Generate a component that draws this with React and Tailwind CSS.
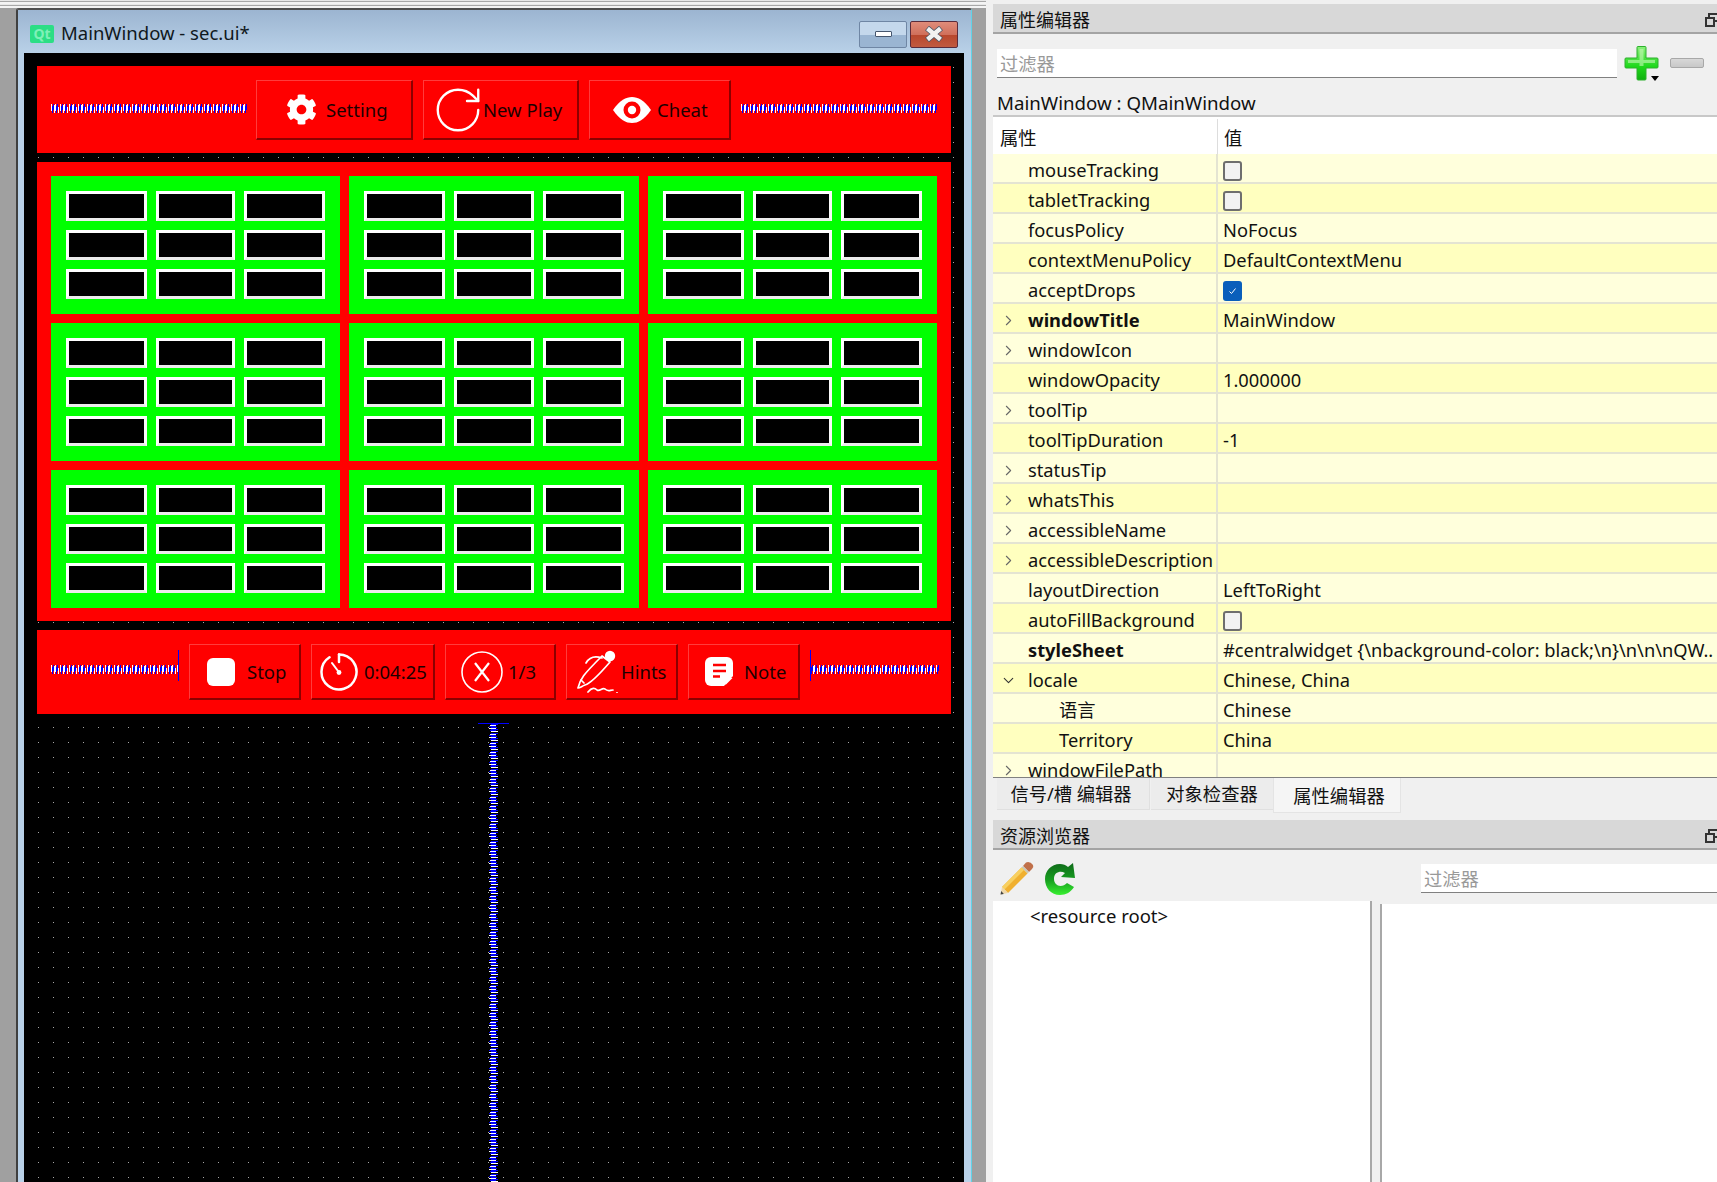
import React from "react";
import { RotateCw, ChevronRight, ChevronDown } from "lucide-react";
import { FaCog } from "react-icons/fa";

function HSpring({ w, cap }) {
  return (
    <div className={`relative h-[9px] shrink-0 ${w}`}>
      <svg width="100%" height="9" className="block" shapeRendering="crispEdges">
        <defs>
          <pattern id={"hs" + cap + w} width="9" height="9" patternUnits="userSpaceOnUse">
            <rect x="0" y="0" width="1" height="7" fill="#fff" />
            <rect x="1" y="2" width="1" height="7" fill="#00f" />
            <rect x="2" y="0" width="1" height="6" fill="#00f" />
            <rect x="3" y="1" width="1" height="8" fill="#fff" />
            <rect x="4" y="0" width="1" height="7" fill="#fff" />
            <rect x="5" y="2" width="1" height="7" fill="#00f" />
            <rect x="6" y="0" width="1" height="6" fill="#00f" />
            <rect x="7" y="3" width="1" height="6" fill="#fff" />
          </pattern>
        </defs>
        <rect width="100%" height="9" fill={`url(#hs${cap}${w})`} />
      </svg>
      {cap === "right" && <div className="absolute right-0 top-[-15px] h-[31px] w-px bg-[#0000ff]" />}
      {cap === "left" && <div className="absolute left-0 top-[-15px] h-[31px] w-px bg-[#0000ff]" />}
    </div>
  );
}

function VSpring() {
  return (
    <div className="relative ml-[441px] mt-[9px] h-[459px] w-[31px]">
      <div className="h-px w-[31px] bg-[#0000ff]" />
      <svg width="9" height="458" className="ml-[11px] block" shapeRendering="crispEdges">
        <defs>
          <pattern id="vs" width="9" height="9" patternUnits="userSpaceOnUse">
            <rect y="0" x="2" height="1" width="7" fill="#00f" />
            <rect y="1" x="1" height="1" width="6" fill="#fff" />
            <rect y="2" x="0" height="1" width="7" fill="#00f" />
            <rect y="3" x="2" height="1" width="6" fill="#00f" />
            <rect y="4" x="0" height="1" width="7" fill="#fff" />
            <rect y="5" x="2" height="1" width="7" fill="#00f" />
            <rect y="6" x="1" height="1" width="6" fill="#00f" />
            <rect y="7" x="2" height="1" width="7" fill="#fff" />
          </pattern>
        </defs>
        <rect width="9" height="458" fill="url(#vs)" />
      </svg>
    </div>
  );
}

function Btn({ className, children }) {
  return (
    <div className={`flex shrink-0 items-center border-t border-l border-r-2 border-b-2 border-t-[#ff3c3c] border-l-[#ff3c3c] border-r-[#8c0000] border-b-[#8c0000] text-[18.5px] leading-none text-[#1c0000] ${className}`}>
      {children}
    </div>
  );
}

function T({ children }) {
  return <span className="pt-[2px]">{children}</span>;
}

function TopT({ children }) {
  return <span className="pt-[1px]">{children}</span>;
}

function Eye() {
  return (
    <svg width="38" height="26" viewBox="0 0 38 26">
      <path d="M0 13 C7 3 13 0 19 0 C25 0 31 3 38 13 C31 23 25 26 19 26 C13 26 7 23 0 13 Z" fill="#fff" />
      <circle cx="19" cy="13" r="8.5" fill="#f00" />
      <circle cx="19" cy="13" r="4.2" fill="#fff" />
    </svg>
  );
}

function Timer() {
  return (
    <svg width="38" height="38" viewBox="0 0 38 38" fill="none" stroke="#fff" strokeWidth="2.5" strokeLinecap="round">
      <path d="M19 1.5 A17.5 17.5 0 1 1 9.5 4.3" />
      <path d="M19 1.5 V9" />
      <path d="M18 18 L12 10" strokeWidth="2" />
      <circle cx="19" cy="19.5" r="2.4" fill="#fff" stroke="none" />
    </svg>
  );
}

function CircleX() {
  return (
    <svg width="42" height="42" viewBox="0 0 42 42" fill="none" stroke="#fff">
      <circle cx="21" cy="21" r="20" strokeWidth="1.6" />
      <path d="M14 12 L28 30 M28 12 L14 30" strokeWidth="2.2" />
    </svg>
  );
}

function Pen() {
  return (
    <svg width="42" height="43" viewBox="0 0 42 43" fill="none" stroke="#fff" strokeWidth="1.7" strokeLinecap="round" strokeLinejoin="round">
      <path d="M1 38 C3 29 6 25 25 6 L33 12 C27 19 15 33 8 35 C5 36 3 38 1 38 Z" />
      <path d="M9 13 C13 6 19 6 25 8" />
      <path d="M7 33 L4 30" />
      <circle cx="33" cy="6" r="5.2" fill="#fff" stroke="none" />
      <path d="M11 42 C15 37 18 38 20 40 C23 42 25 37 28 39 C31 42 33 40 36 40" />
      <circle cx="40" cy="43" r="1" fill="#fff" stroke="none" />
    </svg>
  );
}

function NoteIcon() {
  return (
    <svg width="28" height="29" viewBox="0 0 28 29">
      <path d="M6 0 H22 A6 6 0 0 1 28 6 V19 L19 29 H6 A6 6 0 0 1 0 23 V6 A6 6 0 0 1 6 0 Z" fill="#fff" />
      <path d="M8 8 H21 M8 14 H21 M8 19.5 H15" stroke="#f00" strokeWidth="2.4" fill="none" />
      <path d="M20.5 28 V23 Q20.5 21 22.5 21 H27.5 Z" fill="#fff" />
    </svg>
  );
}

function QtLogo() {
  return (
    <div className="flex h-[18px] w-[24px] items-center justify-center rounded-[2px] bg-[#2cde85] text-[14px] font-bold leading-none text-[#7ff0b8]">
      Qt
    </div>
  );
}

function Cell({ w }) {
  return <div className={`h-[30px] border-[3px] border-t-white border-l-white border-r-[#fafafa] border-b-[#ececec] bg-black ${w}`} />;
}

function Block({ mid }) {
  const rows = [0, 1, 2];
  return (
    <div className="flex flex-col gap-[9px] bg-[#00ff00] pl-[15px] pt-[15px]">
      {rows.map((r) => (
        <div key={r} className="flex gap-[9px]">
          <Cell w="w-[81px]" />
          <Cell w={mid ? "w-[80px]" : "w-[79px]"} />
          <Cell w="w-[81px]" />
        </div>
      ))}
    </div>
  );
}

function MainWindow() {
  return (
    <div className="flex h-[1174px] w-[956px] flex-col rounded-t-[3px] border-t-2 border-l-2 border-r border-t-[#505050] border-l-[#404040] border-r-[#5fd4e8] bg-[#b9d1e8]">
      <div className="flex h-[43px] shrink-0 items-center bg-gradient-to-b from-[#9cb5d1] to-[#b9d1e8] pl-[12px] pt-[5px]">
        <QtLogo />
        <span className="ml-[7px] -mt-[2px] text-[18.5px] leading-none text-[#101820]">MainWindow - sec.ui*</span>
        <div className="ml-auto mr-[13px] flex gap-[3px]">
          <div className="flex h-[27px] w-[48px] items-center justify-center rounded-[2px] border border-[#6f86a4] bg-[linear-gradient(#c4d8ec_50%,#9ab5d2_50%)]">
            <div className="h-[6px] w-[17px] rounded-[1px] border border-[#45566e] bg-white" />
          </div>
          <div className="flex h-[27px] w-[48px] items-center justify-center rounded-[2px] border border-[#5a2c3c] bg-[linear-gradient(#e08c7a,#d0705c_50%,#b8462c_50%,#c05a40)]">
            <svg width="20" height="16" viewBox="0 0 20 16">
              <path d="M3 2 L17 14 M17 2 L3 14" stroke="#4c5868" strokeWidth="6" />
              <path d="M3.5 2.5 L16.5 13.5 M16.5 2.5 L3.5 13.5" stroke="#f2f2f2" strokeWidth="4.4" />
            </svg>
          </div>
        </div>
      </div>
      <div className="flex min-h-0 flex-1 pl-[6px] pr-[7px]">
        <div className="w-[940px] bg-black bg-[radial-gradient(circle_at_0.5px_0.5px,#a8a8a8_0.6px,transparent_0.7px)] bg-[length:15px_15px] bg-[position:14px_14px] pl-[13px] pt-[13px]">
          <div className="flex h-[87px] w-[914px] items-start gap-[10px] bg-[#ff0000] pl-[14px] pt-[14px]">
            <div className="mr-[-1px] pt-[24px]"><HSpring w="w-[196px]" cap="none1" /></div>
            <Btn className="h-[60px] w-[157px] pl-[29px] gap-[9px]">
              <FaCog size={31} color="#fff" />
              <TopT>Setting</TopT>
            </Btn>
            <Btn className="h-[60px] w-[156px] pl-[12px] gap-[3px]">
              <RotateCw size={54} color="#fff" strokeWidth={1.05} className="-m-[5px] shrink-0" />
              <TopT>New Play</TopT>
            </Btn>
            <Btn className="h-[60px] w-[142px] pl-[23px] gap-[6px]">
              <Eye />
              <TopT>Cheat</TopT>
            </Btn>
            <div className="pt-[24px]"><HSpring w="w-[196px]" cap="none2" /></div>
          </div>
          <div className="mt-[9px] grid h-[459px] w-[914px] grid-cols-[289px_290px_289px] grid-rows-[138px_138px_138px] gap-[9px] bg-[#ff0000] pl-[14px] pt-[14px]">
            {[0, 1, 2, 3, 4, 5, 6, 7, 8].map((i) => (
              <Block key={i} mid={i % 3 === 1} />
            ))}
          </div>
          <div className="mt-[9px] flex h-[84px] w-[914px] items-start gap-[10px] bg-[#ff0000] pl-[14px] pt-[14px]">
            <div className="pt-[21px]"><HSpring w="w-[128px]" cap="right" /></div>
            <Btn className="h-[56px] w-[112px] pl-[17px] gap-[12px]">
              <div className="h-[28px] w-[28px] rounded-[6px] bg-white" />
              <T>Stop</T>
            </Btn>
            <Btn className="h-[56px] w-[124px] pl-[8px] gap-[6px]">
              <Timer />
              <T>0:04:25</T>
            </Btn>
            <Btn className="h-[56px] w-[111px] pl-[15px] gap-[5px]">
              <CircleX />
              <T>1/3</T>
            </Btn>
            <Btn className="h-[56px] w-[112px] pl-[10px] gap-[2px]">
              <Pen />
              <T>Hints</T>
            </Btn>
            <Btn className="h-[56px] w-[112px] pl-[16px] gap-[11px]">
              <NoteIcon />
              <T>Note</T>
            </Btn>
            <div className="pt-[21px]"><HSpring w="w-[129px]" cap="left" /></div>
          </div>
          <VSpring />
        </div>
      </div>
    </div>
  );
}

function DockHeader({ title }) {
  return (
    <div className="flex h-[30px] shrink-0 items-center justify-between overflow-hidden border-b-2 border-[#a4a4a4] bg-[#d8d8d8] pl-[7px] pt-[4px] text-[18px] leading-none text-[#111]">
      <span>{title}</span>
      <svg width="12" height="14" viewBox="0 0 12 14" fill="none" stroke="#333" strokeWidth="2" className="-mt-[1px]">
        <rect x="4" y="1" width="10" height="7" />
        <rect x="1" y="5" width="8" height="8" fill="#d8d8d8" />
      </svg>
    </div>
  );
}

function Filter({ className }) {
  return (
    <div className={`flex h-[29px] items-center border-b border-[#808080] bg-white pl-[3px] pt-[2px] text-[18.3px] leading-none text-[#999] ${className}`}>
      过滤器
    </div>
  );
}

const props = [
  { n: "mouseTracking", c: "off" },
  { n: "tabletTracking", c: "off" },
  { n: "focusPolicy", v: "NoFocus" },
  { n: "contextMenuPolicy", v: "DefaultContextMenu" },
  { n: "acceptDrops", c: "on" },
  { n: "windowTitle", v: "MainWindow", b: true, e: "r" },
  { n: "windowIcon", e: "r" },
  { n: "windowOpacity", v: "1.000000" },
  { n: "toolTip", e: "r" },
  { n: "toolTipDuration", v: "-1" },
  { n: "statusTip", e: "r" },
  { n: "whatsThis", e: "r" },
  { n: "accessibleName", e: "r" },
  { n: "accessibleDescription", e: "r" },
  { n: "layoutDirection", v: "LeftToRight" },
  { n: "autoFillBackground", c: "off" },
  { n: "styleSheet", v: "#centralwidget {\\nbackground-color: black;\\n}\\n\\n\\nQW..", b: true },
  { n: "locale", v: "Chinese, China", e: "d" },
  { n: "语言", v: "Chinese", sub: true },
  { n: "Territory", v: "China", sub: true },
  { n: "windowFilePath", e: "r" },
];

function PropRow({ p, i }) {
  return (
    <div className={`flex h-[30px] shrink-0 border-b-2 border-[#e4e4d2] text-[18.3px] leading-none text-[#111] ${i % 2 ? "bg-[#ffffbf]" : "bg-[#ffffdc]"}`}>
      <div className={`relative flex w-[225px] shrink-0 items-center whitespace-nowrap border-r-2 border-[#e4e4d2] pt-[4px] ${p.sub ? "pl-[66px]" : "pl-[35px]"} ${p.b ? "font-bold" : ""}`}>
        {p.e === "r" && <ChevronRight size={17} color="#666666" strokeWidth={1.5} className="absolute left-[7px] top-[8px]" />}
        {p.e === "d" && <ChevronDown size={17} color="#333333" strokeWidth={1.5} className="absolute left-[7px] top-[8px]" />}
        {p.n}
      </div>
      <div className="flex min-w-0 flex-1 items-center whitespace-nowrap pl-[5px] pt-[4px]">
        {p.v}
        {p.c === "off" && <div className="mt-[1px] h-[20px] w-[19px] rounded-[3px] border-2 border-[#6e6e6e] bg-[#f2f2f2]" />}
        {p.c === "on" && (
          <div className="mt-[1px] flex h-[20px] w-[19px] items-center justify-center rounded-[3px] bg-[#0a5fbb]">
            <svg width="9" height="8" viewBox="0 0 9 8" fill="none" stroke="#fff" strokeWidth="1"><path d="M1.5 4.5 L3.5 6.5 L7.5 1.5" /></svg>
          </div>
        )}
      </div>
    </div>
  );
}

function PlusIcon() {
  return (
    <div className="relative h-[35px] w-[36px]">
      <svg width="36" height="35" viewBox="0 0 36 35">
        <defs>
          <linearGradient id="plusg" x1="0" y1="0" x2="0" y2="1">
            <stop offset="0" stopColor="#8cf07c" />
            <stop offset="0.6" stopColor="#1ed81a" />
            <stop offset="1" stopColor="#10b010" />
          </linearGradient>
        </defs>
        <path d="M13 1.5 Q13 0.5 14 0.5 H21 Q22 0.5 22 1.5 V12 H33 Q34 12 34 13 V21 Q34 22 33 22 H22 V33 Q22 34 21 34 H14 Q13 34 13 33 V22 H2 Q1 22 1 21 V13 Q1 12 2 12 H13 Z" fill="url(#plusg)" stroke="#2cb02c" strokeWidth="1" />
        <path d="M15.5 3 H19.5 V14 H31 V17 H19.5 V20 H15.5 V17 H4 V14 H15.5 Z" fill="#c6f8b8" opacity="0.6" />
      </svg>
      <div className="absolute bottom-[0px] right-[1px] h-0 w-0 border-x-[4px] border-t-[5px] border-x-transparent border-t-black" />
    </div>
  );
}

function Pencil() {
  return (
    <svg width="34" height="34" viewBox="0 0 34 34">
      <path d="M26 1.5 Q30 0 33 4 Q34 6 32 8 L29 11 L23 5 Z" fill="#c0704a" />
      <path d="M23 5 L29 11 L27.5 12.5 L21.5 6.5 Z" fill="#c8c8b8" />
      <path d="M21.5 6.5 L27.5 12.5 L8 32 L2 26 Z" fill="#f0b030" />
      <path d="M21.5 6.5 L24 9 L4.5 28.5 L2 26 Z" fill="#f8d060" />
      <path d="M2 26 L8 32 L0.5 33.5 Z" fill="#f0d8a8" />
      <path d="M1.2 30 L3.8 33 L0.5 33.5 Z" fill="#444" />
    </svg>
  );
}

function Refresh() {
  return (
    <svg width="32" height="32" viewBox="0 0 32 32">
      <defs>
        <linearGradient id="refg" x1="0" y1="0" x2="0" y2="1">
          <stop offset="0" stopColor="#0f6a1a" />
          <stop offset="0.55" stopColor="#18a020" />
          <stop offset="1" stopColor="#38f030" />
        </linearGradient>
      </defs>
      <path d="M16 1 C19 1 22 2 24 4 L29 0 L31 15 L17 14 L21 10 C19 9 17 8.5 15 9 C11 10 10 13 10 16 C10 20 13 23 16.5 23 C19 23 21 22 23 20 L30 24 C27 29 22 32 16 32 C7 32 1 25 1 16 C1 8 7 1 16 1 Z" fill="url(#refg)" />
    </svg>
  );
}

function Dock() {
  return (
    <div className="flex h-[1182px] w-[731px] shrink-0 flex-col bg-[#f0f0f0] pl-[7px] pt-[4px]">
      <DockHeader title="属性编辑器" />
      <div className="flex h-[50px] shrink-0 items-start pl-[4px] pt-[15px]">
        <Filter className="w-[620px]" />
        <div className="ml-[7px] -mt-[3px]"><PlusIcon /></div>
        <div className="ml-[10px] mt-[9px] h-[10px] w-[34px] rounded-[2px] border border-[#a8a8a8] bg-gradient-to-b from-[#d8d8d8] to-[#c8c8c8]" />
      </div>
      <div className="flex h-[33px] shrink-0 items-center border-b-2 border-[#c8c8c8] pl-[4px] pt-[7px] text-[18.7px] leading-none text-[#111]">
        MainWindow : QMainWindow
      </div>
      <div className="flex h-[661px] shrink-0 flex-col overflow-hidden border-b border-[#808080] bg-white">
        <div className="mt-[2px] flex h-[35px] shrink-0 items-center text-[18.3px] leading-none text-[#111]">
          <div className="flex h-full w-[225px] items-center border-r border-[#dddddd] pl-[7px] pt-[4px]">属性</div>
          <div className="pl-[6px] pt-[4px]">值</div>
        </div>
        {props.map((p, i) => (
          <PropRow key={p.n} p={p} i={i} />
        ))}
      </div>
      <div className="flex h-[42px] shrink-0 items-start pl-[4px] text-[18.3px] leading-none text-[#111]">
        <div className="flex h-[32px] w-[153px] items-center justify-center border-r border-b border-[#e0e0e0] bg-[#ececec] pt-[2px] pr-[4px]">信号/槽 编辑器</div>
        <div className="ml-px flex h-[32px] w-[122px] items-center justify-center border-b border-[#e0e0e0] bg-[#ececec] pt-[2px]">对象检查器</div>
        <div className="flex h-[35px] w-[128px] items-center justify-center border-x border-b border-[#e4e4e4] bg-[#f5f5f5] pt-[3px] pl-[4px]">属性编辑器</div>
      </div>
      <DockHeader title="资源浏览器" />
      <div className="flex h-[51px] shrink-0 items-start pl-[7px] pt-[11px]">
        <Pencil />
        <div className="ml-[10px] mt-[2px]"><Refresh /></div>
        <Filter className="ml-[345px] mt-[3px] flex-1" />
      </div>
      <div className="flex min-h-0 flex-1">
        <div className="w-[379px] border-r-2 border-[#a8a8a8] bg-white pl-[37px] pt-[3px] text-[18.5px] leading-[24px] text-[#111]">
          &lt;resource root&gt;
        </div>
        <div className="w-[8px] bg-[#f0f0f0]" />
        <div className="mt-[3px] flex-1 border-l-2 border-[#a8a8a8] bg-white" />
      </div>
    </div>
  );
}

export default function App() {
  return (
    <div className="flex h-[1182px] w-[1717px] overflow-hidden bg-[#f0f0f0] font-['Noto_Sans','Noto_Sans_CJK_SC',sans-serif]">
      <div className="h-[1182px] w-[986px] shrink-0 bg-[#a0a0a0]">
        <div className="h-[8px] bg-[repeating-linear-gradient(#e8e8e8_0,#e8e8e8_1px,#a8a8a8_1px,#a8a8a8_2px,#f4f4f4_2px,#f4f4f4_4px)]" />
        <div className="pl-[16px]"><MainWindow /></div>
      </div>
      <Dock />
    </div>
  );
}
